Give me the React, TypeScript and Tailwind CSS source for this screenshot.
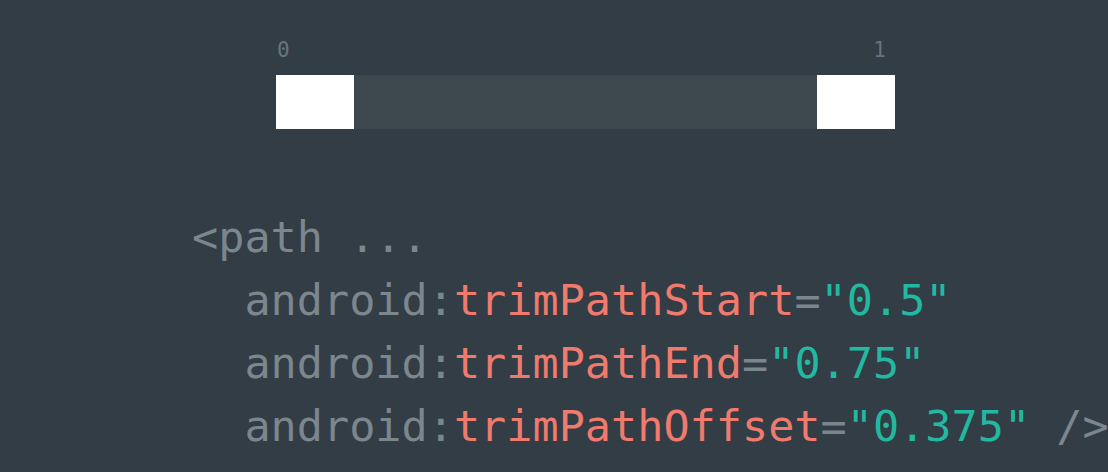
const mono = { fontFamily: '"DejaVu Sans Mono", "Liberation Mono", monospace' };

const Line = ({ attr, value, end }: { attr: string; value: string; end?: boolean }) => (
  <div className="whitespace-pre">
    <span className="text-[#7b868d]">{"  android:"}</span>
    <span className="text-[#ef7a6d]">{attr}</span>
    <span className="text-[#7b868d]">=</span>
    <span className="text-[#22b8a2]">"{value}"</span>
    {end && <span className="text-[#7b868d]">{" />"}</span>}
  </div>
);

export default function App() {
  return (
    <div
      className="w-[1108px] h-[472px] overflow-hidden bg-[#323d45] flex flex-col"
      style={mono}
    >
      {/* trim range bar */}
      <div className="ml-[276px] mt-[40px] w-[619px]">
        <div className="flex justify-between text-[21px] leading-[21px] text-[#68747b]">
          <span className="ml-[1px]">0</span>
          <span className="mr-[9px]">1</span>
        </div>
        <div className="mt-[14px] h-[54px] flex bg-[#3c474e]">
          <div className="w-[78px] h-full bg-white" />
          <div className="flex-1" />
          <div className="w-[78px] h-full bg-white" />
        </div>
      </div>

      {/* code */}
      <div className="ml-[192px] mt-[77px] text-[43.5px] leading-[63px]">
        <div className="whitespace-pre text-[#7b868d]">{"<path ..."}</div>
        <Line attr="trimPathStart" value="0.5" />
        <Line attr="trimPathEnd" value="0.75" />
        <Line attr="trimPathOffset" value="0.375" end />
      </div>
    </div>
  );
}
